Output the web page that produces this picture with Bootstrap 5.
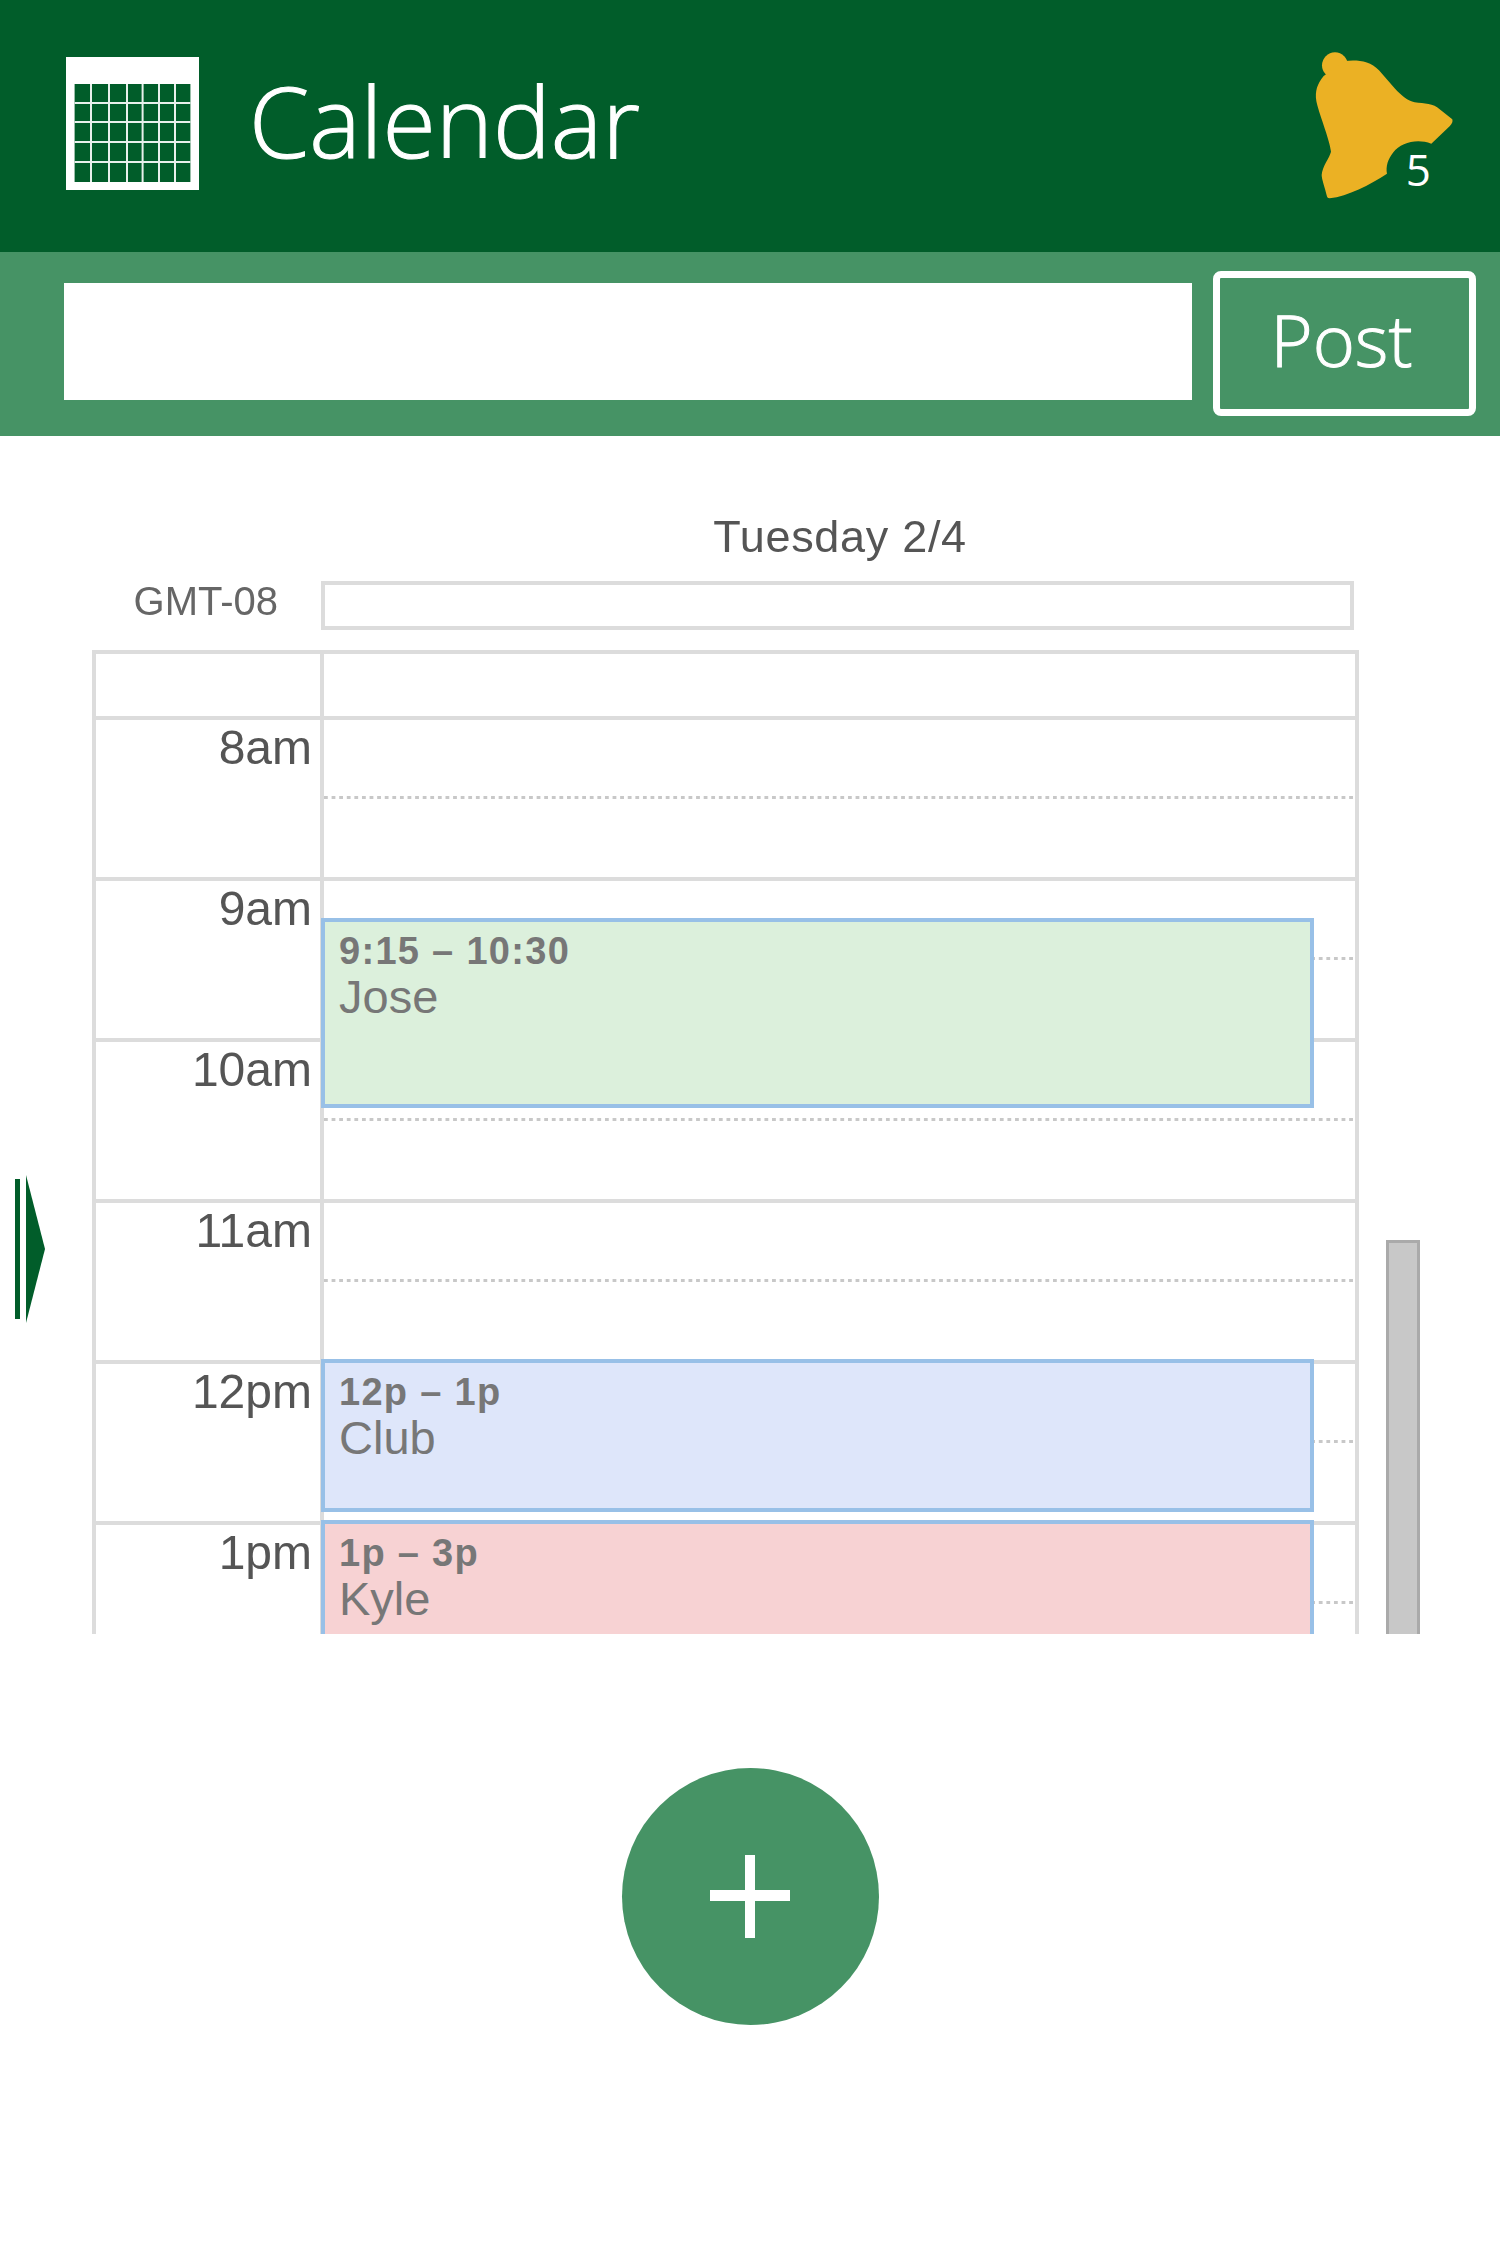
<!DOCTYPE html>
<html lang="en">
<head>
<meta charset="utf-8">
<title>Calendar</title>
<link href="https://cdn.jsdelivr.net/npm/bootstrap@5.3.0/dist/css/bootstrap.min.css" rel="stylesheet">
<style>
body{background:#fff;font-family:"Liberation Sans",Arial,sans-serif}
.app-head{height:252px;background:#015d2a;color:#fff;padding:0 44px 5px 66px}
.app-title{font-family:"Open Sans",sans-serif;font-weight:300;font-size:97px;line-height:1;margin:0 0 6px 50px;letter-spacing:0;-webkit-text-stroke:1.1px #fff}
.bell-wrap{width:143px;height:150px;margin-top:4px}
.bell-count{right:25px;top:88px;font-family:"Open Sans",sans-serif;font-size:44px;line-height:60px;color:#fff}
.post-bar{height:184px;background:#469365;padding:19px 24px 0 64px;gap:21px}
.post-input{width:1128px;height:117px;margin-top:12px;border:0;border-radius:0;flex:none}
.post-btn{width:263px;height:145px;border:7px solid #fff;border-radius:8px;background:transparent;color:#fff;font-family:"Open Sans",sans-serif;font-weight:300;font-size:72px;line-height:1;padding:0 6px 10px 0;flex:none;-webkit-text-stroke:1px #fff}
.cal-area{height:1198px;overflow:hidden}
.nav-arrow{width:92px;flex:none;padding:739px 0 0 15px;gap:6px}
.nav-bar{width:5px;height:140px;margin-top:4px;background:#015d2a}
.cal-col{width:1267px;flex:none;filter:blur(.5px)}
.day-title{height:131px;padding:76px 0 0 229px;text-align:center;font-size:45px;line-height:50px;color:#555;letter-spacing:.7px}
.tz-row{height:83px}
.tz-label{width:229px;padding:11px 43px 0 0;text-align:right;font-size:40px;line-height:46px;color:#666;flex:none}
.allday{width:1033px;height:49px;margin-top:14px;border:4px solid #dcdcdc;flex:none}
.grid-box{border-left:4px solid #dcdcdc;border-right:4px solid #dcdcdc}
.hour-row{border-top:4px solid #dcdcdc;height:161px}
.hour-row.first{height:66px}
.hour-label{width:224px;padding:2px 8px 0 0;text-align:right;font-size:48px;line-height:52px;color:#555;flex:none}
.hour-cell{border-left:4px solid #dcdcdc;flex:1}
.half-slot{height:76px}
.half-line{height:3px;background-image:linear-gradient(90deg,#c8c8c8 4px,transparent 4px);background-size:7.6px 3px}
.cal-event{left:225px;width:993px;border:4px solid #98c0e7;padding:7px 0 0 14px;color:#777;font-size:47px;line-height:48px}
.cal-event b{display:block;font-size:38px;line-height:44px;letter-spacing:1.3px;color:#777}
.ev-green{top:268px;height:190px;background:#dcf0dc}
.ev-blue{top:709px;height:153px;background:#dee6fa}
.ev-red{top:870px;height:220px;background:#f7d2d3}
.scroll-thumb{width:34px;height:500px;margin:804px 0 0 27px;flex:none;background:#c8c8c8;border:3px solid #aaa;border-bottom:0}
.add-btn{width:257px;height:257px;margin-top:134px;background:#469365;border:0;padding:0}
</style>
</head>
<body>
<header class="app-head d-flex align-items-center">
  <svg width="133" height="133" viewBox="0 0 133 133" aria-hidden="true">
    <rect width="133" height="133" fill="#fff"/>
    <rect x="8.6" y="27" width="115.8" height="98" fill="#015d2a"/>
    <g stroke="#e8f1ec" stroke-width="2">
      <path d="M25 27V125M43 27V125M61 27V125M76.6 27V125M93 27V125M109 27V125"/>
      <path d="M8.6 46H124.4M8.6 65H124.4M8.6 85H124.4M8.6 105H124.4"/>
    </g>
  </svg>
  <h1 class="app-title">Calendar</h1>
  <div class="bell-wrap position-relative ms-auto">
    <svg width="143.3" height="150" viewBox="640 150 430 450" aria-hidden="true">
      <circle cx="706" cy="193" r="39" fill="#ebb124"/>
      <path fill="#ebb124" d="M735 180C770 176 810 178 838 208L885 262C905 284 925 300 945 304C975 308 1000 306 1022 326L1058 355C1060 362 1058 368 1050 376L995 428C950 412 905 425 880 455C865 475 858 495 862 518C810 552 745 585 690 592C684 592 682 588 681 583C676 560 666 535 666 522C668 495 690 470 694 452C690 415 655 330 650 300C646 270 652 250 672 225Z"/>
    </svg>
    <span class="bell-count position-absolute">5</span>
  </div>
</header>

<div class="post-bar d-flex align-items-start">
  <input class="form-control post-input" type="text" aria-label="Post">
  <button class="btn post-btn" type="button">Post</button>
</div>

<main class="cal-area d-flex">
  <div class="nav-arrow d-flex align-items-start">
    <div class="nav-bar"></div>
    <svg width="19" height="148" viewBox="0 0 19 148" aria-hidden="true"><path d="M0 0L19 74L0 148Z" fill="#015d2a"/></svg>
  </div>
  <div class="cal-col">
    <div class="day-title">Tuesday 2/4</div>
    <div class="tz-row d-flex">
      <div class="tz-label">GMT-08</div>
      <div class="allday"></div>
    </div>
    <div class="grid-box position-relative">
      <div class="hour-row first d-flex"><div class="hour-label"></div><div class="hour-cell"></div></div>
      <div class="hour-row d-flex"><div class="hour-label">8am</div><div class="hour-cell"><div class="half-slot"></div><div class="half-line"></div></div></div>
      <div class="hour-row d-flex"><div class="hour-label">9am</div><div class="hour-cell"><div class="half-slot"></div><div class="half-line"></div></div></div>
      <div class="hour-row d-flex"><div class="hour-label">10am</div><div class="hour-cell"><div class="half-slot"></div><div class="half-line"></div></div></div>
      <div class="hour-row d-flex"><div class="hour-label">11am</div><div class="hour-cell"><div class="half-slot"></div><div class="half-line"></div></div></div>
      <div class="hour-row d-flex"><div class="hour-label">12pm</div><div class="hour-cell"><div class="half-slot"></div><div class="half-line"></div></div></div>
      <div class="hour-row d-flex"><div class="hour-label">1pm</div><div class="hour-cell"><div class="half-slot"></div><div class="half-line"></div></div></div>
      <div class="cal-event ev-green position-absolute"><b>9:15 – 10:30</b>Jose</div>
      <div class="cal-event ev-blue position-absolute"><b>12p – 1p</b>Club</div>
      <div class="cal-event ev-red position-absolute"><b>1p – 3p</b>Kyle</div>
    </div>
  </div>
  <div class="scroll-thumb"></div>
</main>

<div class="text-center">
  <button class="btn add-btn rounded-circle d-inline-flex align-items-center justify-content-center" type="button" aria-label="Add">
    <svg width="80" height="83" viewBox="0 0 80 83" aria-hidden="true"><path d="M35 0H45V35H80V46H45V83H35V46H0V35H35Z" fill="#fff"/></svg>
  </button>
</div>
<script src="https://cdn.jsdelivr.net/npm/bootstrap@5.3.0/dist/js/bootstrap.bundle.min.js"></script>
</body>
</html>
